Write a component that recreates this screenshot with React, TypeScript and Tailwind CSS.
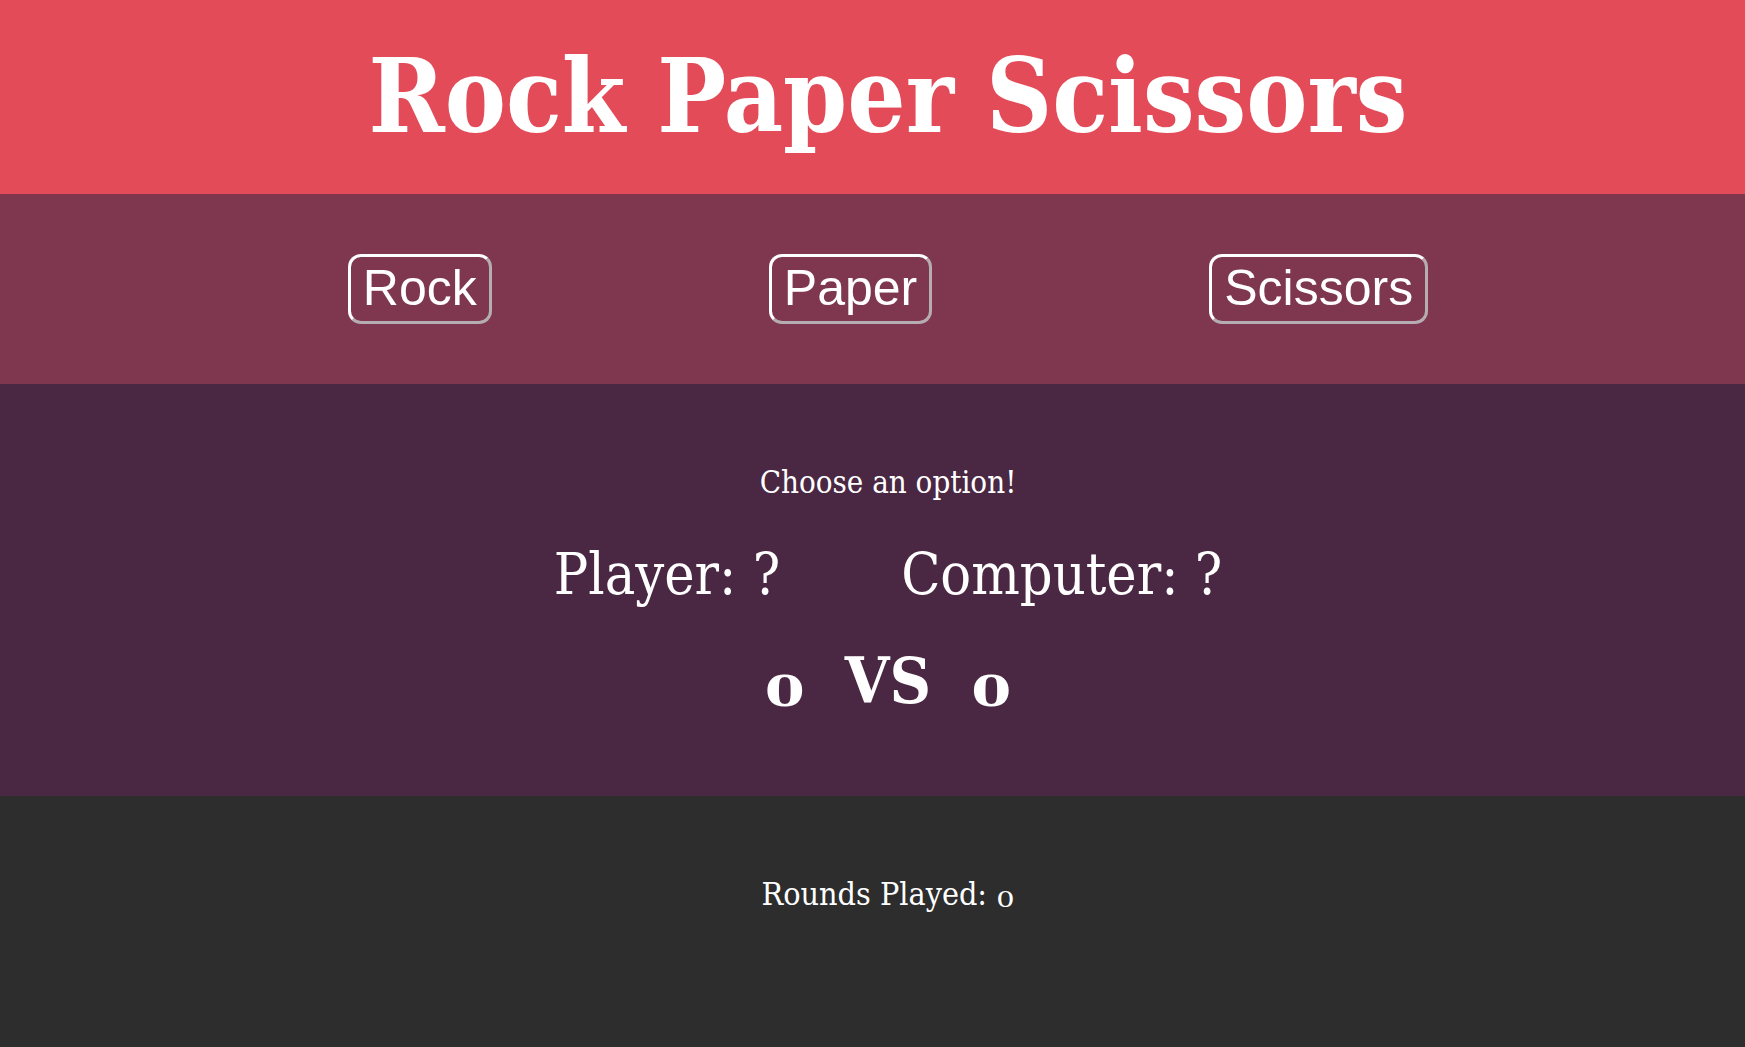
const serif = "font-['DejaVu_Serif',Georgia,serif] font-stretch-condensed";

const CHOICES = ["Rock", "Paper", "Scissors"];

function Zero({ className }: { className?: string }) {
  // squashed so it reads like Georgia's old-style figure
  return <span className={"inline-block origin-bottom scale-y-[0.68] " + (className ?? "")}>0</span>;
}

export default function App() {
  return (
    <div className={`${serif} text-white`}>
      <header className="flex h-[194px] items-center justify-center bg-[#e34b59] pb-[3px] pl-[31px]">
        <h1 className="text-[102px] font-bold leading-none">Rock Paper Scissors</h1>
      </header>

      <section className="flex h-[190px] items-center justify-center gap-[277px] bg-[#7f374f] pl-[31px]">
        {CHOICES.map((c) => (
          <button
            key={c}
            className="rounded-[13px] border-[3px] border-t-white border-l-white border-r-[#b5adb2] border-b-[#b5adb2] bg-transparent px-3 py-[3px] font-['Liberation_Sans',Arial,sans-serif] text-[50px] leading-[1.15] font-normal text-white [font-stretch:normal]"
          >
            {c}
          </button>
        ))}
      </section>

      <section className="flex h-[412px] flex-col items-center bg-[#4a2742] pl-[31px] pt-[83px]">
        <p className="text-[31px] leading-none">Choose an option!</p>
        <div className="mt-[48px] flex gap-[121px] text-[57px] leading-none">
          <span>Player: ?</span>
          <span>Computer: ?</span>
        </div>
        <div className="mt-[46px] flex items-baseline gap-[40px] text-[64px] font-bold leading-none">
          <Zero />
          <span>VS</span>
          <Zero />
        </div>
      </section>

      <footer className="flex h-[251px] flex-col items-center bg-[#2d2d2d] pl-[31px] pt-[82px]">
        <p className="text-[32px] leading-none">
          Rounds Played: <Zero />
        </p>
      </footer>
    </div>
  );
}
